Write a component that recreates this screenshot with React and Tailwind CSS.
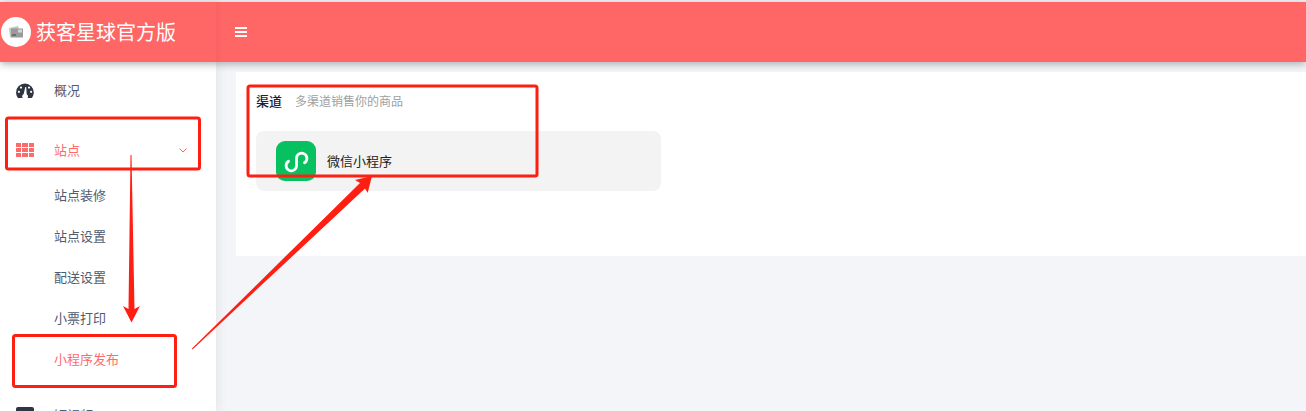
const SUB_ITEMS = ['站点装修', '站点设置', '配送设置', '小票打印', '小程序发布'];

function Gauge() {
  return (
    <svg className="w-[18px] h-[16px]" viewBox="0 0 18 16">
      <path fill="#2f3542" d="M9 .5A8.900 8.900 0 0 0 .1 9.400c0 2 .6 3.800 1.700 5.300.2.300.5.400.8.400h4.200c-.4-.5-.6-1.100-.6-1.700 0-1 .6-1.900 1.500-2.400L9.300 4h.9l.5 7.300c.8.500 1.300 1.300 1.300 2.100 0 .6-.2 1.200-.6 1.700h3.900c.3 0 .6-.1.8-.4a8.900 8.900 0 0 0 1.700-5.300A8.900 8.900 0 0 0 9 .5z" />
      <circle cx="5" cy="4.600" r="1.100" fill="#fff" />
      <circle cx="13" cy="4.600" r="1.100" fill="#fff" />
      <circle cx="2.900" cy="8.800" r="1.100" fill="#fff" />
      <circle cx="15.100" cy="8.800" r="1.100" fill="#fff" />
    </svg>
  );
}

function Grid() {
  return (
    <div className="grid grid-cols-3 gap-[1px] w-[18px]">
      {Array.from({ length: 9 }).map((_, i) => (
        <span key={i} className="h-[4px] bg-[#ff6b6b]" />
      ))}
    </div>
  );
}

function MiniProgram() {
  return (
    <div className="w-10 h-10 rounded-[9px] bg-[#07c160]">
      <svg className="w-10 h-10" viewBox="0 0 40 40" fill="none" stroke="#fff" strokeWidth="2.800" strokeLinecap="round">
        <path d="M28.500 21.800A5.200 5.200 0 1 0 20.500 17.300V24.700A5.200 5.200 0 1 1 12.500 20.200" />
      </svg>
    </div>
  );
}

function LogoPicture() {
  return (
    <svg className="w-[16px] h-[14px]" viewBox="0 0 16 14">
      <path fill="#c4c4c4" d="M1 3l9-2 1 3-8 2 1 6-2 .5z" />
      <rect x="3" y="3.500" width="12" height="9" fill="#9a9a9a" />
      <rect x="10" y="4.500" width="4" height="3" fill="#d4d4d4" />
      <rect x="4" y="9" width="4" height="2" fill="#6e6e6e" />
    </svg>
  );
}

function Annotations() {
  return (
    <svg className="absolute left-0 top-0 pointer-events-none" width="1306" height="411" viewBox="0 0 1306 411" fill="none">
      <g stroke="#ff1f12" strokeWidth="3">
        <rect x="6.500" y="118" width="193" height="51" rx="2" />
        <rect x="13.500" y="335.500" width="162" height="51" rx="2" />
        <rect x="248" y="86" width="289" height="90" rx="2" />
      </g>
      <path fill="#ff1f12" d="M130.500 155h1l3 154 5.500-3-8.500 16.500-8.500-16.500 5.500 3z" />
      <path fill="#ff1f12" d="M192 348.500L360 183 355 180 372 176 367.700 192.700 365 188.500 192.500 349.500z" />
    </svg>
  );
}

export default function App() {
  return (
    <div className="relative w-[1306px] h-[411px] overflow-hidden bg-[#f4f5f9] text-[13px] font-['Noto_Sans_CJK_SC','Liberation_Sans',sans-serif]">
      {/* Header */}
      <header className="relative z-10 mt-[2px] h-[60px] flex bg-[#ff6666] text-white shadow-[0_2px_8px_rgba(0,0,0,0.3)]">
        <div className="w-[216px] flex items-center pl-[1px] gap-[5px] shadow-[2px_0_6px_rgba(0,0,0,0.05)]">
          <div className="w-[30px] h-[30px] rounded-full bg-white flex items-center justify-center">
            <LogoPicture />
          </div>
          <span className="text-[20px] leading-none">获客星球官方版</span>
        </div>
        <div className="pl-[19px] flex items-center">
          <div className="w-3 flex flex-col gap-[2px]">
            <span className="h-[2px] bg-white" />
            <span className="h-[2px] bg-white" />
            <span className="h-[2px] bg-white" />
          </div>
        </div>
      </header>

      <div className="flex">
        {/* Sidebar */}
        <aside className="w-[216px] shrink-0 bg-white h-[349px] overflow-hidden text-[#515a6e] shadow-[2px_0_10px_rgba(29,35,41,0.08)]">
          <div className="h-[57px] flex items-center pl-[16px]">
            <span className="w-[38px]"><Gauge /></span>
            <span className="-mt-[2px]">概况</span>
          </div>
          <div className="h-[60px] mt-[1px] flex items-center pl-[16px] text-[#ff6b6b]">
            <span className="w-[38px]"><Grid /></span>
            <span>站点</span>
            <svg className="ml-auto mr-[29px] w-[8px] h-[8px]" viewBox="0 0 8 8" fill="none" stroke="#ff6666">
              <path d="M.5 2.500l3.500 3.500 3.500-3.500" />
            </svg>
          </div>
          <ul className="-mt-[5px]">
            {SUB_ITEMS.map((item) => (
              <li key={item} className={`h-[41px] flex items-center pl-[54px] ${item === '小程序发布' ? 'text-[#ff6b6b]' : ''}`}>
                <span className="-mt-[1px]">{item}</span>
              </li>
            ))}
          </ul>
          <div className="h-[60px] mt-[5px] flex items-center pl-[16px]">
            <span className="w-[38px]"><div className="w-[18px] h-[16px] rounded-[2px] bg-[#2f3542]" /></span>
            <span>短视频</span>
          </div>
        </aside>

        {/* Content */}
        <main className="flex-1 pl-5 pt-[10px]">
          <section className="bg-white h-[184px] pl-5 pt-[19px]">
            <div className="flex items-center h-[20px]">
              <span className="text-[#17233d] font-medium">渠道</span>
              <span className="ml-[13px] text-[12px] text-[#a0a0a0]">多渠道销售你的商品</span>
            </div>
            <div className="mt-[20px] w-[405px] h-[60px] rounded-lg bg-[#f3f3f3] flex pl-5 pt-[10px]">
              <MiniProgram />
              <span className="ml-[11px] mt-[10px] text-[#222]">微信小程序</span>
            </div>
          </section>
        </main>
      </div>

      <Annotations />
    </div>
  );
}
